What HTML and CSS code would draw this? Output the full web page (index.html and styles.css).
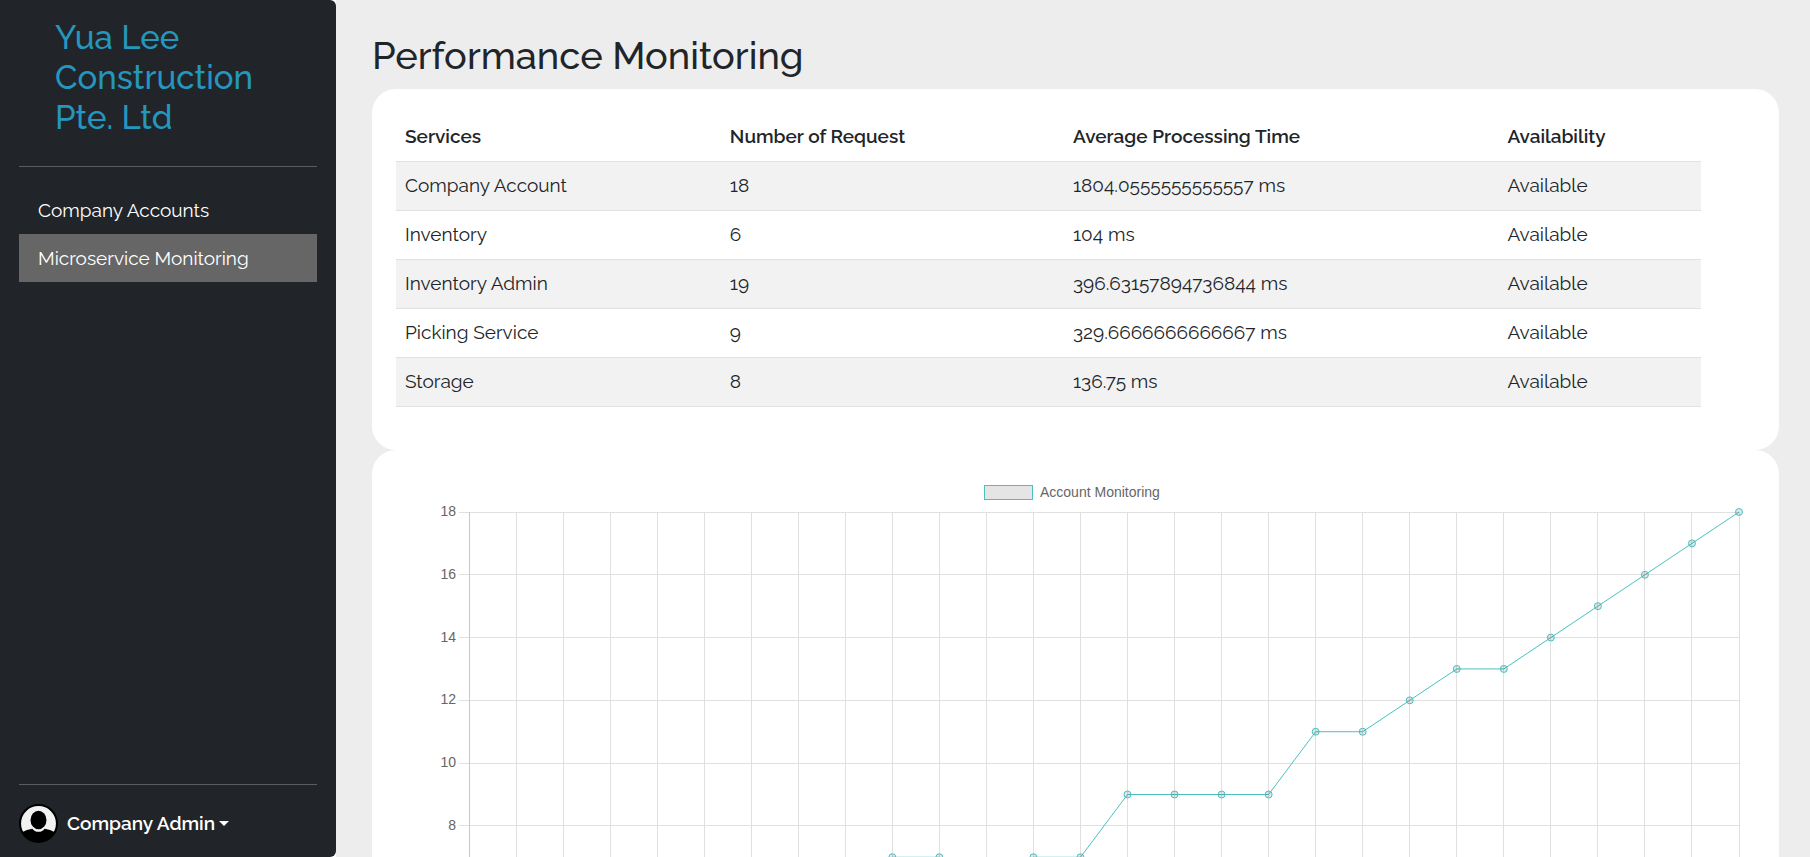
FILE: index.html
```
<!DOCTYPE html>
<html lang="en">
<head>
<meta charset="utf-8">
<title>Performance Monitoring</title>
<link rel="stylesheet" href="styles.css">
</head>
<body>
<div class="layout">
  <div class="sidebar-wrap">
    <aside class="sidebar">
      <a class="brand" href="#">Yua Lee Construction Pte. Ltd</a>
      <hr class="divider">
      <nav class="menu">
        <a class="menu-link" href="#">Company Accounts</a>
        <a class="menu-link active" href="#" aria-current="page">Microservice Monitoring</a>
      </nav>
      <hr class="divider">
      <button class="account" type="button" aria-haspopup="true">
        <svg class="avatar" viewBox="0 0 38 38" aria-hidden="true">
          <defs><clipPath id="disc"><circle cx="19" cy="19" r="18"/></clipPath></defs>
          <circle cx="19" cy="19" r="18" fill="#f2f2f2"/>
          <g clip-path="url(#disc)">
            <path d="M0 38V28L4 27Q7 25 13 24Q15 27 19 27Q23 27 25 24Q31 25 34 27L38 28V38Z"/>
            <ellipse cx="19" cy="15.5" rx="7.8" ry="9"/>
          </g>
          <circle cx="19" cy="19" r="18" fill="none" stroke="#000" stroke-width="2"/>
        </svg>
        <span>Company Admin</span>
        <span class="caret"></span>
      </button>
    </aside>
  </div>
  <main class="content">
    <h1 class="page-title">Performance Monitoring</h1>
    <section class="card">
      <table class="services">
        <colgroup><col class="col-service"><col class="col-requests"><col class="col-time"><col></colgroup>
        <thead>
          <tr><th scope="col">Services</th><th scope="col">Number of Request</th><th scope="col">Average Processing Time</th><th scope="col">Availability</th></tr>
        </thead>
        <tbody>
          <tr><td>Company Account</td><td>18</td><td>1804.0555555555557 ms</td><td>Available</td></tr>
          <tr><td>Inventory</td><td>6</td><td>104 ms</td><td>Available</td></tr>
          <tr><td>Inventory Admin</td><td>19</td><td>396.63157894736844 ms</td><td>Available</td></tr>
          <tr><td>Picking Service</td><td>9</td><td>329.6666666666667 ms</td><td>Available</td></tr>
          <tr><td>Storage</td><td>8</td><td>136.75 ms</td><td>Available</td></tr>
        </tbody>
      </table>
    </section>
    <section class="card">
      <svg class="chart" id="chart" viewBox="0 0 1359 680" role="img" aria-label="Account Monitoring"></svg>
    </section>
  </main>
</div>
<script src="chart.js"></script>
</body>
</html>
```
FILE: styles.css
```
* {
  box-sizing: border-box;
}

body {
  margin: 0;
  background: #ededed;
  color: #212529;
  font-family: Raleway, Lato, sans-serif;
  font-size: 19px;
  line-height: 29px;
}

.layout {
  display: flex;
  height: 100vh;
}

.sidebar-wrap {
  flex: 0 0 336px;
  background: #fff;
}

.sidebar {
  display: flex;
  flex-direction: column;
  height: 100%;
  padding: 18px 19px 14px;
  border-radius: 0 6px 6px 0;
  background: #212529;
  color: #fff;
}

.brand {
  padding: 0 36px;
  margin-bottom: 28px;
  color: #2596be;
  font-size: 33px;
  font-weight: 500;
  line-height: 40px;
  text-decoration: none;
}

.divider {
  width: 100%;
  height: 1px;
  margin: 0;
  border: 0;
  background: #5a5d60;
}

.menu {
  display: flex;
  flex: 1;
  flex-direction: column;
  padding-top: 19px;
}

.menu-link {
  padding: 10px 19px 9px;
  color: #fff;
  text-decoration: none;
}

.menu-link.active {
  background: #666;
}

.account {
  display: flex;
  align-items: center;
  gap: 9px;
  margin-top: 19px;
  padding: 0;
  border: 0;
  background: none;
  color: #fff;
  font: inherit;
  font-weight: 600;
}

.avatar {
  width: 39px;
  height: 39px;
}

.caret {
  margin-left: -5px;
  border: 5px solid transparent;
  border-top-color: #fff;
  border-bottom: 0;
}

.content {
  flex: 1;
  min-width: 0;
  padding: 33px 31px 0 36px;
  overflow-y: auto;
  scrollbar-width: none;
}

.page-title {
  margin: 0 0 10px;
  font-size: 38px;
  font-weight: 500;
  line-height: 46px;
}

.card {
  padding: 24px;
  border-radius: 24px;
  background: #fff;
}

.services {
  width: 96%;
  margin-bottom: 19px;
  border-collapse: collapse;
  table-layout: fixed;
}

.col-service {
  width: 24.9%;
}

.col-requests {
  width: 26.3%;
}

.col-time {
  width: 33.3%;
}

.services th,
.services td {
  height: 49px;
  padding: 9px;
  border-bottom: 1px solid #dee2e6;
  text-align: left;
}

.services th {
  height: 48px;
  font-weight: 600;
}

.services tbody tr:nth-child(odd) {
  background: #f2f2f2;
}

.chart {
  display: block;
  width: 100%;
}

.chart text {
  fill: #666;
  font-family: "Liberation Sans", Arial, sans-serif;
  font-size: 14px;
}

.grid-line {
  stroke: #e0e0e0;
}

.axis-line {
  stroke: #c8c8c8;
}

.series {
  fill: none;
  stroke: #4bc0c0;
}

.point,
.legend-box {
  fill: #000;
  fill-opacity: 0.1;
  stroke: #4bc0c0;
}
```
FILE: chart.js
```
const values = [0, 1, 1, 2, 3, 4, 5, 5, 6, 7, 7, 6, 7, 7, 9, 9, 9, 9, 11, 11, 12, 13, 13, 14, 15, 16, 17, 18];
const area = { left: 73, right: 1343, top: 38, bottom: 603 };
const max = 18;
const chart = document.getElementById('chart');

function draw(name, attrs, text) {
  const node = document.createElementNS('http://www.w3.org/2000/svg', name);
  for (const key in attrs) node.setAttribute(key, attrs[key]);
  if (text !== undefined) node.textContent = text;
  chart.appendChild(node);
}

const x = i => area.left + i * (area.right - area.left) / (values.length - 1);
const y = v => area.bottom - v * (area.bottom - area.top) / max;
const crisp = n => Math.floor(n) + 0.5;

draw('rect', { class: 'legend-box', x: 588.5, y: 11.5, width: 48, height: 14 });
draw('text', { x: 644, y: 23 }, 'Account Monitoring');

for (let v = 0; v <= max; v += 2) {
  draw('line', { class: 'grid-line', x1: area.left - 10, x2: area.right, y1: crisp(y(v)), y2: crisp(y(v)) });
  draw('text', { x: area.left - 13, y: y(v) + 4, 'text-anchor': 'end' }, v);
}
values.forEach((v, i) => {
  draw('line', { class: i ? 'grid-line' : 'axis-line', x1: crisp(x(i)), x2: crisp(x(i)), y1: area.top, y2: area.bottom + 10 });
});

draw('polyline', { class: 'series', points: values.map((v, i) => x(i) + ',' + y(v)).join(' ') });
values.forEach((v, i) => draw('circle', { class: 'point', cx: x(i), cy: y(v), r: 3.5 }));
```
